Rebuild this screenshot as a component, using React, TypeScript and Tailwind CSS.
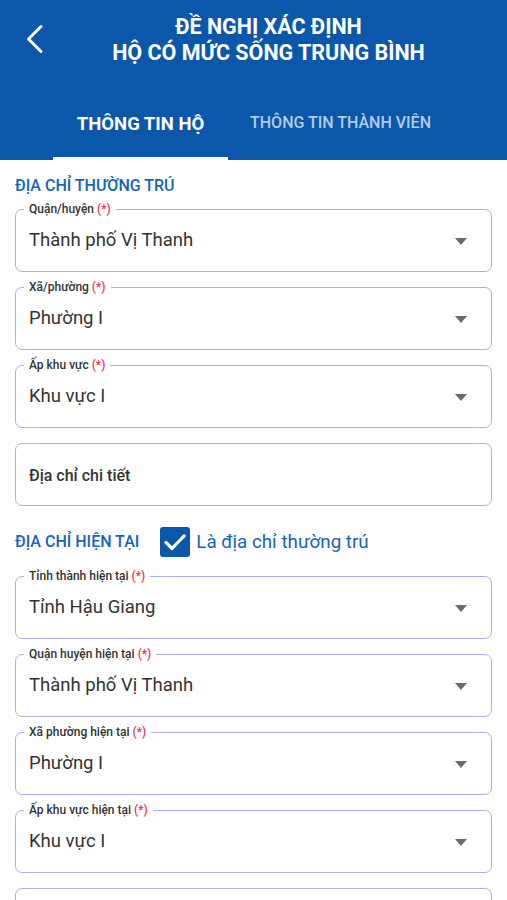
const FONT = { fontFamily: "Roboto, 'Noto Sans', 'Liberation Sans', sans-serif" };

type FieldProps = { label?: string; value: string; required?: boolean; dropdown?: boolean };

function Field({ label, value, required = true, dropdown = true }: FieldProps) {
  return (
    <div className="relative mx-[15px] h-[63px] rounded-[7px] border-[1.5px] border-[#a9b0f0] flex items-center pl-[13px] pr-[24px]">
      {label && (
        <span className="absolute -top-[8px] left-[8px] bg-white px-[5px] text-[12px] leading-[14px] font-medium text-[#333]">
          {label}
          {required && <span className="text-[#e8345a]"> (*)</span>}
        </span>
      )}
      <span className="flex-1 text-[18.5px] text-[#333]">{value}</span>
      {dropdown && (
        <svg width="12" height="7" viewBox="0 0 12 7" className="mt-[2px]">
          <path d="M0 0 L12 0 L6 7 Z" fill="#6b6b6b" />
        </svg>
      )}
    </div>
  );
}

export default function App() {
  return (
    <div className="w-[507px] h-[900px] overflow-hidden bg-white" style={FONT}>
      <header className="bg-[#0b57ab] h-[160px] flex flex-col">
        <div className="flex items-start pt-[13px]">
          <button className="w-[60px] h-[52px] flex items-center justify-center ml-[4px]">
            <svg width="22" height="30" viewBox="0 0 22 30" fill="none">
              <path d="M18 2.5 L5.5 15 L18 27.5" stroke="white" strokeWidth="3" strokeLinecap="round" strokeLinejoin="round" />
            </svg>
          </button>
          <h1 className="flex-1 pr-[34px] text-center text-white font-bold text-[21.5px] leading-[26px] mt-[1px]">
            ĐỀ NGHỊ XÁC ĐỊNH
            <br />
            HỘ CÓ MỨC SỐNG TRUNG BÌNH
          </h1>
        </div>
        <nav className="mt-auto flex items-end">
          <div className="ml-[53px] w-[175px] flex flex-col items-center">
            <span className="text-white font-bold text-[18.5px] leading-[22px]">THÔNG TIN HỘ</span>
            <span className="mt-[22px] h-[3px] w-full bg-white"></span>
          </div>
          <div className="ml-[22px] flex flex-col items-start">
            <span className="text-white/70 font-medium text-[16px] leading-[22px]">THÔNG TIN THÀNH VIÊN</span>
            <span className="mt-[22px] h-[4px]"></span>
          </div>
        </nav>
      </header>

      <section className="flex flex-col">
        <h2 className="px-[15px] pt-[16px] text-[16px] leading-[20px] font-medium text-[#1565b8]">
          ĐỊA CHỈ THƯỜNG TRÚ
        </h2>
        <div className="mt-[13px] flex flex-col gap-[15px]">
          <Field label="Quận/huyện" value="Thành phố Vị Thanh" />
          <Field label="Xã/phường" value="Phường I" />
          <Field label="Ấp khu vực" value="Khu vực I" />
          <div className="mx-[15px] h-[63px] rounded-[7px] border-[1.5px] border-[#a9b0f0] flex items-center px-[13px] pt-[3px]">
            <span className="text-[16px] font-medium text-[#333]">Địa chỉ chi tiết</span>
          </div>
        </div>

        <div className="mt-[21px] h-[30px] px-[15px] flex items-center">
          <span className="text-[16px] font-medium text-[#1565b8]">ĐỊA CHỈ HIỆN TẠI</span>
          <span className="ml-[21px] w-[30px] h-[30px] rounded-[3px] bg-[#0b57ab] flex items-center justify-center">
            <svg width="22" height="18" viewBox="0 0 22 18" fill="none">
              <path d="M2 9.5 L8 15.5 L20 3" stroke="white" strokeWidth="3.2" strokeLinecap="round" strokeLinejoin="round" />
            </svg>
          </span>
          <span className="ml-[6px] text-[18.8px] text-[#1565b8]">Là địa chỉ thường trú</span>
        </div>

        <div className="mt-[19px] flex flex-col gap-[15px]">
          <Field label="Tỉnh thành hiện tại" value="Tỉnh Hậu Giang" />
          <Field label="Quận huyện hiện tại" value="Thành phố Vị Thanh" />
          <Field label="Xã phường hiện tại" value="Phường I" />
          <Field label="Ấp khu vực hiện tại" value="Khu vực I" />
          <Field value="" dropdown={false} />
        </div>
      </section>
    </div>
  );
}
